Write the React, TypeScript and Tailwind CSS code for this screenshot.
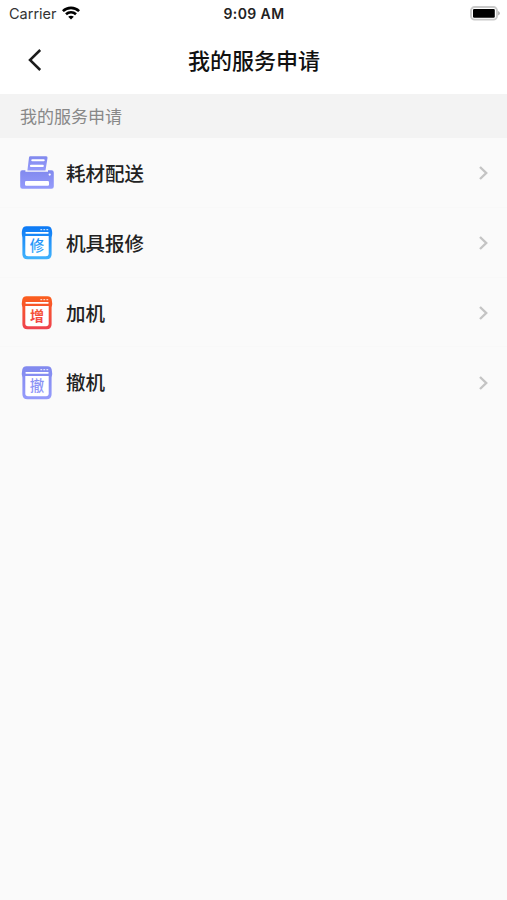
import React from 'react';

interface ServiceIconProps {
  id: string;
  label: string;
  from: string;
  to: string;
}

interface ServiceItem {
  title: string;
  icon: React.ReactNode;
}

const PrinterIcon: React.FC = () => (
  <svg className="h-[34px] w-[34px]" viewBox="0 0 34 34">
    <defs>
      <linearGradient id="printer" x1="0" y1="0" x2="0" y2="1">
        <stop offset="0" stopColor="#8189ee" />
        <stop offset="1" stopColor="#959bfb" />
      </linearGradient>
    </defs>
    <path
      d="M10.2 .3H26.2Q27.8 .3 27.5 2L25.5 14.6H7.4L9 1.5Q9.2 .3 10.2 .3Z"
      fill="url(#printer)"
    />
    <path
      d="M2.2 14.3H5.4V15.8H28V14.3H31.6Q33.8 14.3 33.8 16.5V30.5Q33.8 32.8 31.5 32.8H2.4Q.2 32.8 .2 30.5V16.5Q.2 14.3 2.2 14.3Z"
      fill="url(#printer)"
    />
    <path d="M12.3 4.2H23.7M11 9.9H22.8" stroke="#fff" strokeWidth="2.1" strokeLinecap="round" />
    <rect x="5" y="25" width="24" height="4.8" rx="1.2" fill="#fff" />
    <circle cx="29.7" cy="18.6" r="1.1" fill="#fff" />
  </svg>
);

const ServiceIcon: React.FC<ServiceIconProps> = ({ id, label, from, to }) => (
  <svg className="h-[34px] w-[34px]" viewBox="0 0 34 34">
    <defs>
      <linearGradient id={id} x1="0" y1="0" x2="0" y2="34" gradientUnits="userSpaceOnUse">
        <stop offset="0" stopColor={from} />
        <stop offset="1" stopColor={to} />
      </linearGradient>
    </defs>
    <path
      d="M6.4 .2H27.6Q30.8 .2 31.7 3.4Q32.8 7.5 31.6 11.5V28.2Q31.6 33.3 26.6 33.3H7.4Q2.4 33.3 2.4 28.2V11.5Q1.2 7.5 2.3 3.4Q3.2 .2 6.4 .2Z"
      fill={`url(#${id})`}
    />
    <rect x="5.4" y="6" width="23.3" height="1.7" rx=".8" fill="#fff" />
    <path d="M20.4 3.6H22.2M23.4 3.6H25.2M26.4 3.6H28.2" stroke="#fff" strokeWidth="1.4" opacity=".75" />
    <path d="M5.3 10.1H28.7V27.6Q28.7 30.3 26 30.3H8Q5.3 30.3 5.3 27.6Z" fill="#fff" />
    <text
      x="17"
      y="25.2"
      textAnchor="middle"
      fill={`url(#${id})`}
      className={
        id === 'add'
          ? "font-['Noto_Sans_CJK_SC',sans-serif] text-[14px] font-bold"
          : "font-['Noto_Sans_CJK_SC',sans-serif] text-[14.5px] font-medium"
      }
    >
      {label}
    </text>
  </svg>
);

const services: ServiceItem[] = [
  { title: '耗材配送', icon: <PrinterIcon /> },
  { title: '机具报修', icon: <ServiceIcon id="repair" label="修" from="#0b78f5" to="#42b4fc" /> },
  { title: '加机', icon: <ServiceIcon id="add" label="增" from="#fb5e1c" to="#ee4150" /> },
  { title: '撤机', icon: <ServiceIcon id="remove" label="撤" from="#8189ee" to="#959bfb" /> },
];

const StatusBar: React.FC = () => (
  <div className="grid h-[27px] grid-cols-3 items-center pr-[7px] pl-[9px] font-[Inter,sans-serif] text-[14px] leading-none text-[#222]">
    <div className="flex items-center gap-[5px]">
      <span className="pt-px text-[14.5px] text-[#333]">Carrier</span>
      <svg className="mb-px h-[14px] w-[18px]" viewBox="0 0 18 14" fill="none" stroke="#000" strokeWidth="2.6">
        <path d="M.9 5.2C5.4 .7 12.6 .7 17.1 5.2" />
        <path d="M4 8.3C6.8 5.6 11.2 5.6 14 8.3" />
        <path d="M9 13.6L6.2 10.8C7.8 9.3 10.2 9.3 11.8 10.8Z" fill="#000" stroke="none" />
      </svg>
    </div>
    <span className="pr-px text-center font-semibold tracking-[0.4px]">9:09 AM</span>
    <svg className="h-[15px] w-[31px] justify-self-end" viewBox="0 0 31 15">
      <rect x="2" y="1" width="26" height="12.6" rx="3.6" fill="#fff" stroke="#c9c9c9" strokeWidth="1.9" />
      <rect x="4" y="2.9" width="21.8" height="8.8" rx="1.2" fill="#000" />
      <path d="M29 5Q31 5.8 31 7.3T29 9.6Z" fill="#b5b5b5" />
    </svg>
  </div>
);

const App: React.FC = () => {
  return (
    <div className="min-h-screen bg-[#fafafa] font-['Noto_Sans_CJK_SC',sans-serif]">
      <div className="h-[94px] bg-white">
        <StatusBar />
        <header className="grid h-[66px] grid-cols-[60px_1fr_60px] items-center">
          <svg
            className="ml-[27px] h-[24px] w-[16px]"
            viewBox="0 0 16 24"
            fill="none"
            stroke="#1c1c1c"
            strokeWidth="2.5"
          >
            <path d="M13.2 2L3 12L13.2 22" />
          </svg>
          <h1 className="pb-[2px] pl-px text-center text-[22px] leading-none font-medium text-[#111]">
            我的服务申请
          </h1>
        </header>
      </div>
      <div className="flex h-[44px] items-center bg-[#f3f3f3] pb-px pl-[20px] text-[17px] leading-none text-[#888]">
        我的服务申请
      </div>
      <ul>
        {services.map((service) => (
          <li
            key={service.title}
            className="flex h-[69.75px] items-center border-b border-[#f8f8f8] pt-[2px] pr-[18px] pl-[20px] last:border-transparent"
          >
            {service.icon}
            <span className="mb-px ml-[12px] flex-1 text-[19.5px] leading-none font-medium text-[#222]">
              {service.title}
            </span>
            <svg
              className="h-[14px] w-[11px]"
              viewBox="0 0 11 14"
              fill="none"
              stroke="#c4c4c4"
              strokeWidth="2.4"
            >
              <path d="M2 1L8.2 7L2 13" />
            </svg>
          </li>
        ))}
      </ul>
    </div>
  );
};

export default App;
